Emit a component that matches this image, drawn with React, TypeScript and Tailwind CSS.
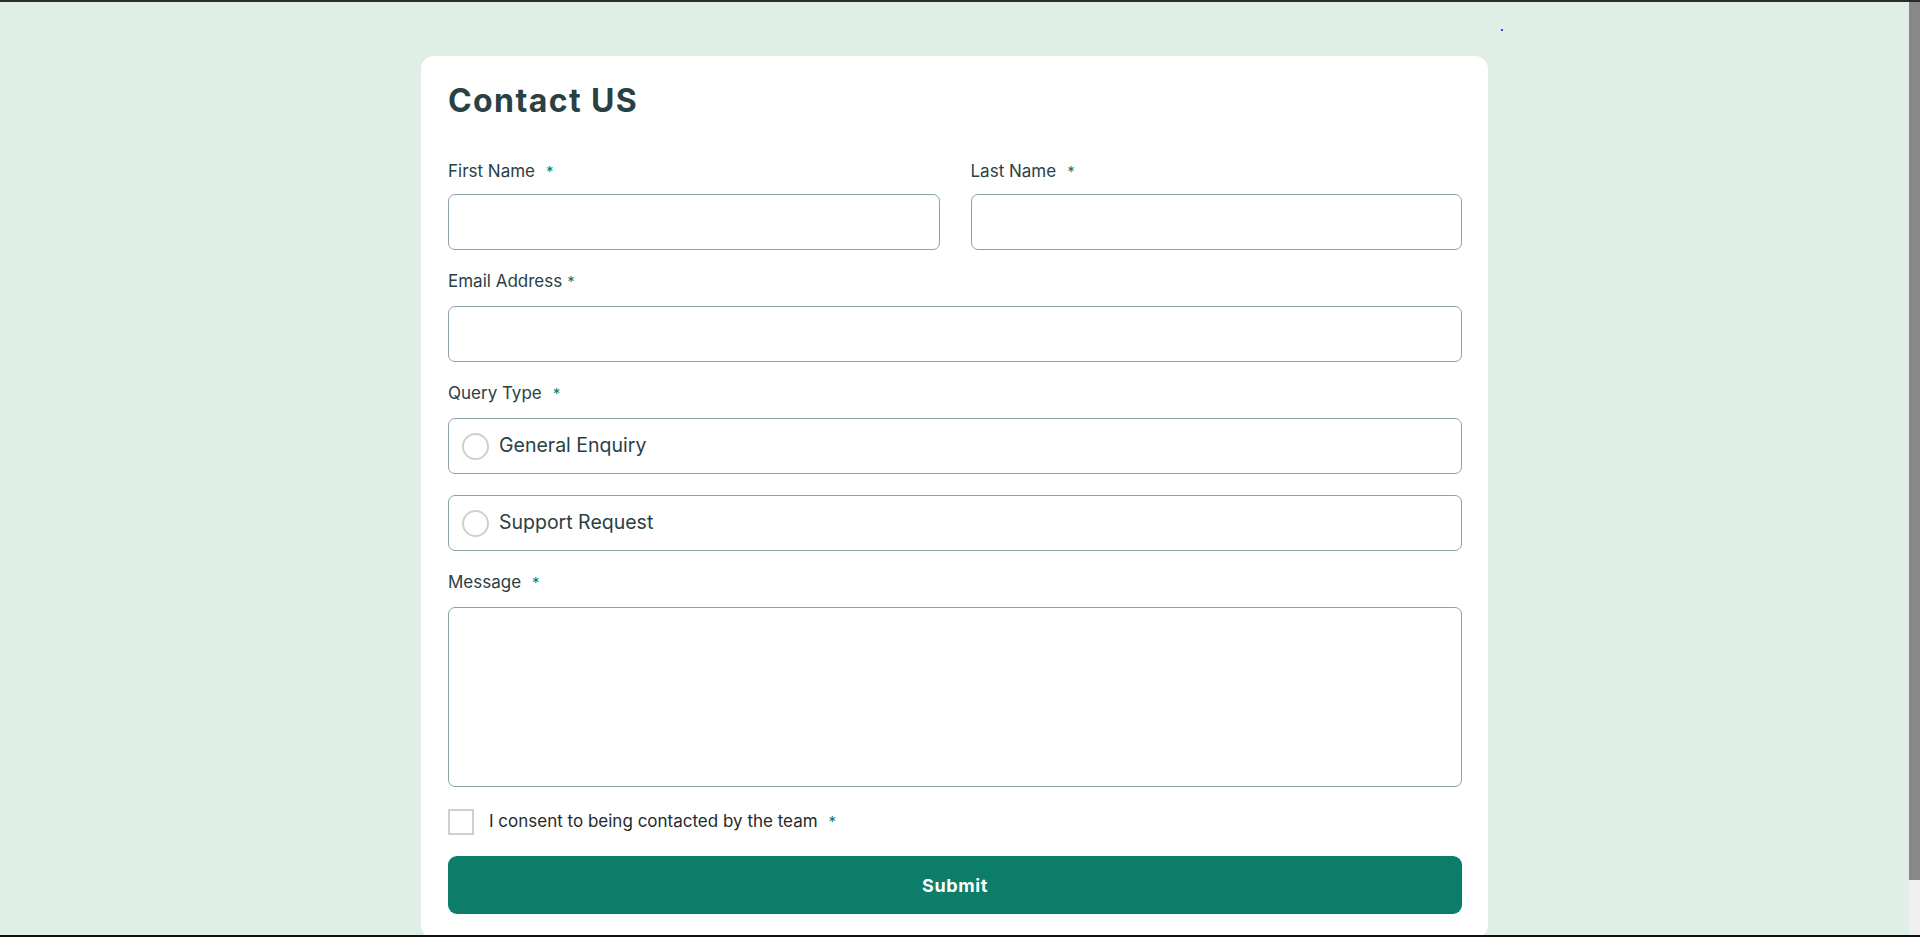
import React from "react";

const FIELD = "block h-[56px] w-full rounded-[7px] border border-[#87a3a6] bg-white outline-none";

function Label({ text, starGap = "ml-[11px]", className = "" }: { text: string; starGap?: string; className?: string }) {
  return (
    <label className={`block text-[17px] leading-6 text-[#2a4144] ${className}`}>
      {text}
      <span className={`${starGap} text-[15px] text-[#0c7d69]`}>*</span>
    </label>
  );
}

function RadioRow({ text, className = "" }: { text: string; className?: string }) {
  return (
    <div className={`flex h-[56px] items-center rounded-[7px] border border-[#87a3a6] pl-[13px] ${className}`}>
      <span className="h-[27px] w-[27px] rounded-full border-2 border-[#cfcfcf]" />
      <span className="ml-[10px] text-[19.5px] text-[#2a4144]">{text}</span>
    </div>
  );
}

export default function App() {
  return (
    <div className="flex h-[937px] w-[1920px] flex-col overflow-hidden bg-[#1c1c1c] font-['Inter','Liberation_Sans',sans-serif]">
      <div className="h-[2px] shrink-0 bg-[#2b2b2b]" />
      <div className="flex h-[933px] shrink-0">
        <main className="relative h-full w-[1909px] overflow-hidden bg-[#dfefe6]">
          <span className="absolute left-[1501px] top-[27px] h-[2px] w-[2px] bg-[#3b3bff]" />
          <div className="mx-auto mt-[54px] w-[1067px] rounded-[13px] bg-white pb-6 pl-[27px] pr-[26px] pt-[25px]">
            <h1 className="text-[32px] font-bold leading-10 tracking-[1.4px] text-[#2a4144]">Contact US</h1>

            <div className="mt-[38px] grid grid-cols-2 gap-x-[31px]">
              <div>
                <Label text="First Name" className="mb-[10px]" />
                <input className={FIELD} />
              </div>
              <div>
                <Label text="Last Name" className="mb-[10px]" />
                <input className={FIELD} />
              </div>
            </div>

            <Label text="Email Address" starGap="ml-[5px]" className="mb-3 mt-[19px]" />
            <input className={FIELD} />

            <Label text="Query Type" className="mb-3 mt-[19px]" />
            <RadioRow text="General Enquiry" />
            <RadioRow text="Support Request" className="mt-[21px]" />

            <Label text="Message" className="mb-3 mt-[19px]" />
            <textarea className="block h-[180px] w-full resize-none rounded-[7px] border border-[#87a3a6] bg-white outline-none" />

            <div className="mt-[22px] flex items-center">
              <span className="h-[26px] w-[26px] border-2 border-[#cfcfcf]" />
              <span className="ml-[15px] text-[17px] text-[#1f2a2b]">I consent to being contacted by the team</span>
              <span className="ml-[11px] text-[15px] text-[#0c7d69]">*</span>
            </div>

            <button className="mt-[21px] flex h-[58px] w-full items-center justify-center rounded-[9px] bg-[#0c7d69] text-[18px] font-bold tracking-[0.6px] text-white">
              Submit
            </button>
          </div>
        </main>
        <div className="flex w-[11px] flex-col bg-[#f0f0f0]">
          <div className="h-[878px] bg-[#888888]" />
        </div>
      </div>
      <div className="h-[2px] shrink-0 bg-[#111]" />
    </div>
  );
}
